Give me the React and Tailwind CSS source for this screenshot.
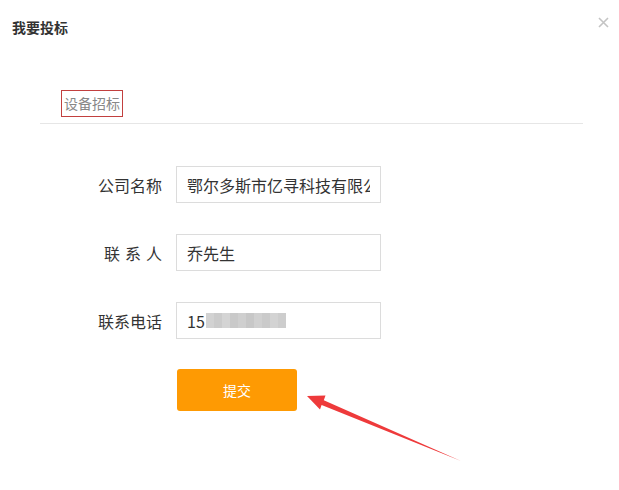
import React from "react";

const font = { fontFamily: '"Noto Sans CJK SC", "Noto Sans", sans-serif' };

function Row({ label, children, spaced }) {
  return (
    <div className="flex items-center h-[37px]">
      <div className="w-[162px] flex justify-end text-[16px] leading-[22px] text-[#333]">
        {spaced ? (
          <span className="inline-flex gap-[5px]">
            <span>联</span>
            <span>系</span>
            <span>人</span>
          </span>
        ) : (
          label
        )}
      </div>
      <div className="ml-[14px] w-[205px] h-[37px] border border-[#dcdcdc] px-[10px] flex items-center">
        <div className="flex-1 overflow-hidden whitespace-nowrap text-[16px] leading-[22px] text-[#333] flex items-center">
          {children}
        </div>
      </div>
    </div>
  );
}

export default function App() {
  const blur = ["#d2d2d2", "#cbcbcb", "#d4d4d4", "#c9c9c9", "#cfcfcf", "#c7c7c7", "#d0d0d0", "#cacaca", "#d3d3d3", "#cdcdcd"];
  return (
    <div className="relative w-[619px] h-[490px] bg-white overflow-hidden" style={font}>
      <div className="flex items-start justify-between pl-[12px] pr-[10px] pt-[18px]">
        <h1 className="text-[14px] leading-[19px] font-bold text-[#333]">我要投标</h1>
        <svg width="11" height="11" viewBox="0 0 11 11" className="mt-[-1px]">
          <path d="M1 1L10 10M10 1L1 10" stroke="#c4c4c4" strokeWidth="1.6" />
        </svg>
      </div>

      <div className="ml-[40px] mr-[36px] mt-[53px] pl-[21px] pb-[6px] border-b border-[#e6e6e6]">
        <span className="inline-block border border-[#c2403f] px-[2px] text-[14px] leading-[25px] text-[#888]">
          设备招标
        </span>
      </div>

      <div className="mt-[42px] flex flex-col gap-[31px]">
        <Row label="公司名称">鄂尔多斯市亿寻科技有限公司</Row>
        <Row spaced>乔先生</Row>
        <Row label="联系电话">
          <span>15</span>
          <span className="flex h-[15px] ml-[1px]">
            {blur.map((c, i) => (
              <span key={i} className="w-[8px] h-[15px]" style={{ background: c }} />
            ))}
          </span>
        </Row>
      </div>

      <button className="ml-[177px] mt-[30px] w-[120px] h-[42px] rounded-[3px] bg-[#fe9a03] text-white text-[14px]">
        提交
      </button>

      <svg className="absolute left-0 top-0 pointer-events-none" width="619" height="490">
        <polygon
          points="307,396 325.5,395.5 323.8,400.3 461,461 321.6,404.9 320,409.5"
          fill="#ee3a3b"
        />
      </svg>
    </div>
  );
}
